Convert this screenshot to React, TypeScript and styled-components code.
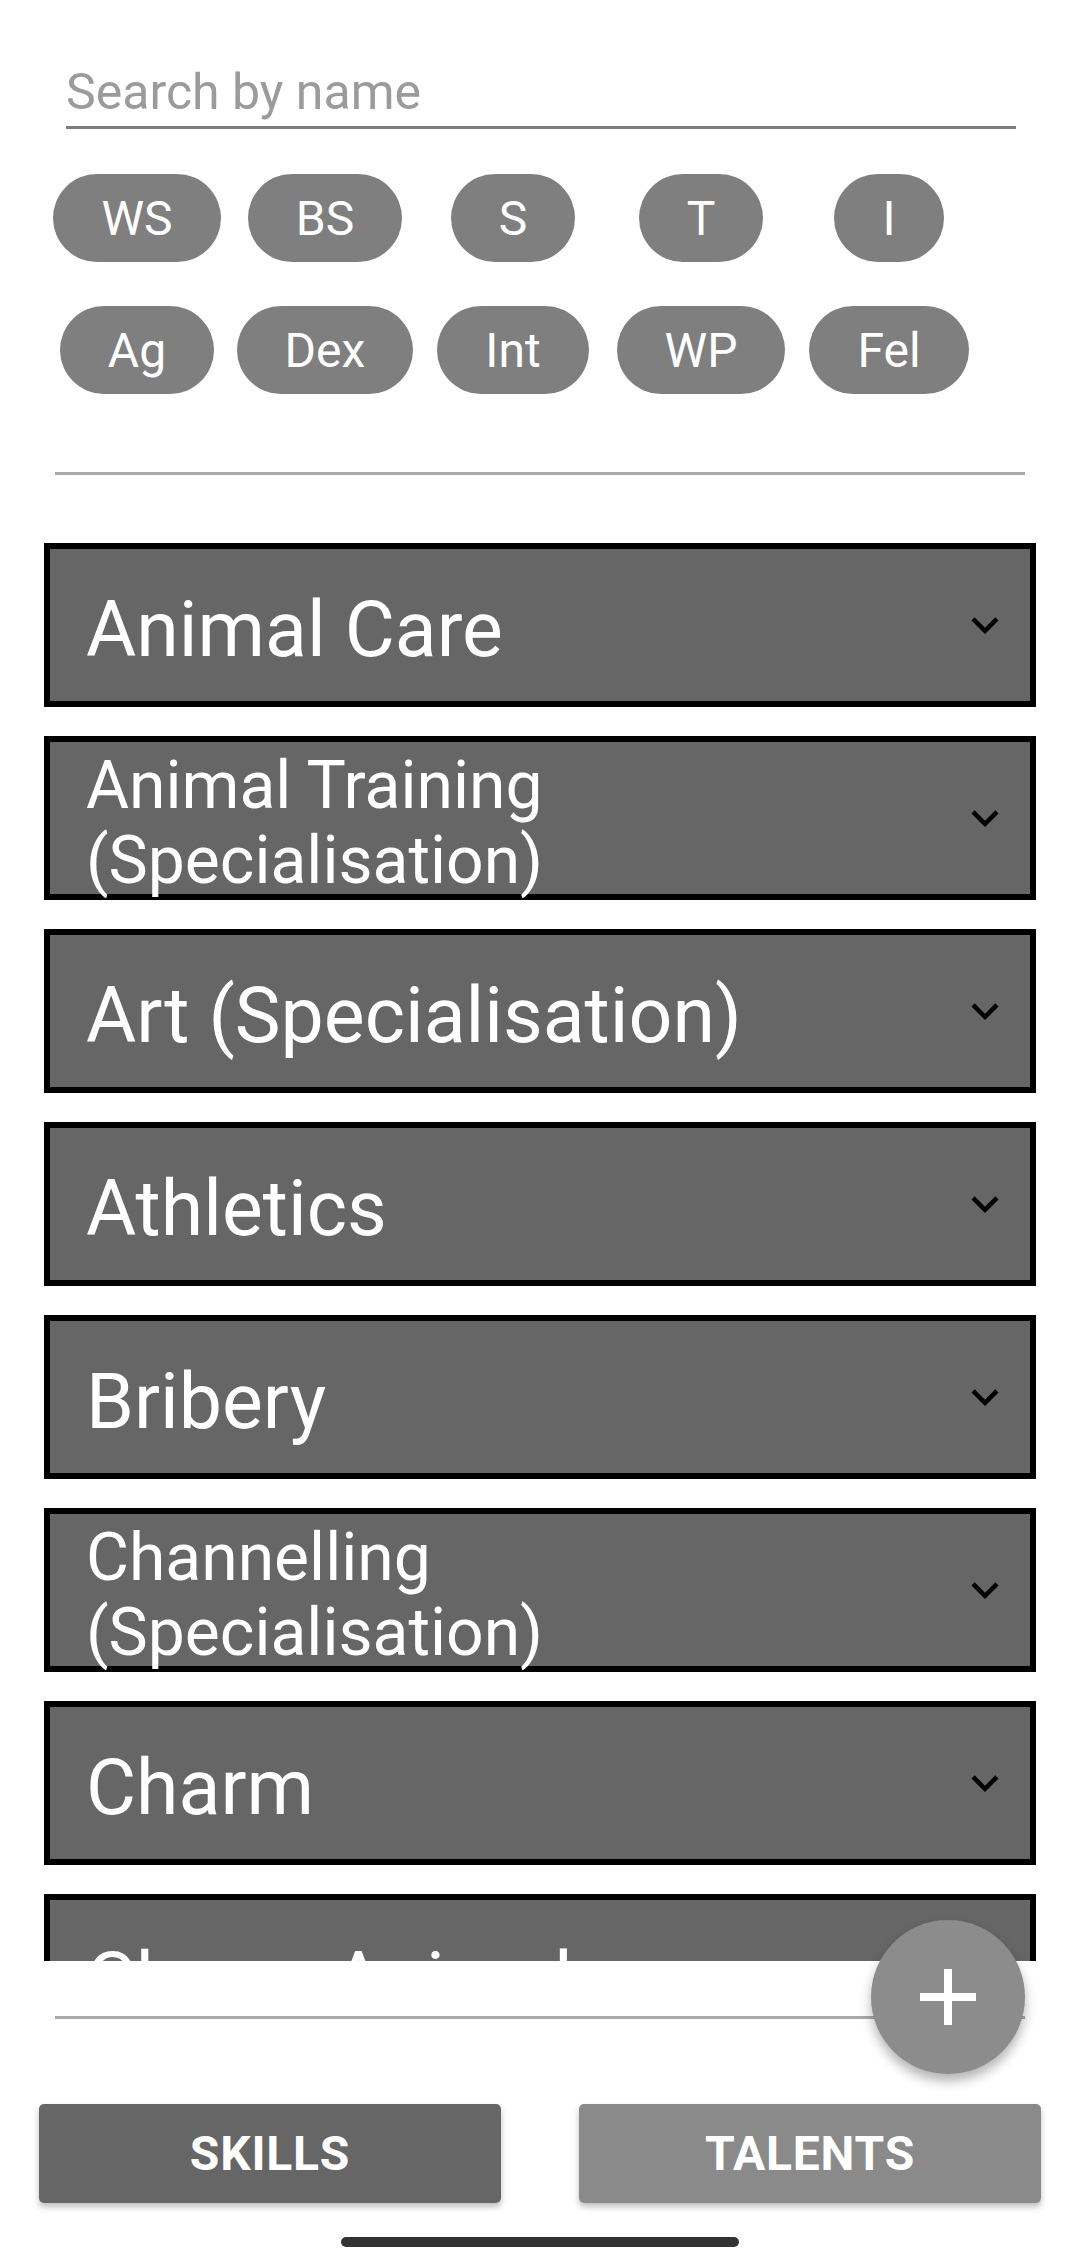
import React from "react";
import styled, { createGlobalStyle } from "styled-components";

const GlobalStyle = createGlobalStyle`
  body {
    margin: 0;
    background: #ffffff;
    font-family: Roboto, "Noto Sans", Arial, sans-serif;
  }
`;

const Page = styled.div`
  position: relative;
  width: 1080px;
  height: 2264px;
  overflow: hidden;
  display: flex;
  flex-direction: column;
  background: #ffffff;
`;

const SearchField = styled.div`
  margin: 64px 64px 0 66px;
  padding-bottom: 6px;
  border-bottom: 3px solid #7c7c7c;
`;

const SearchInput = styled.input`
  display: block;
  width: 100%;
  height: 56px;
  padding: 0;
  border: none;
  outline: none;
  background: transparent;
  font-family: Roboto, "Noto Sans", sans-serif;
  font-size: 50px;
  line-height: 56px;
  color: #333;
  &::placeholder {
    color: #9b9b9b;
  }
`;

const ChipGrid = styled.div`
  display: grid;
  grid-template-columns: repeat(5, 188px);
  row-gap: 44px;
  justify-items: center;
  margin: 45px 0 0 43px;
`;

const Chip = styled.button`
  height: 88px;
  padding: 0 48px;
  border: none;
  border-radius: 44px;
  background: #7f7f7f;
  color: #ffffff;
  font-family: Roboto, "Noto Sans", sans-serif;
  font-size: 48px;
  display: inline-flex;
  align-items: center;
  justify-content: center;
`;

const Divider = styled.div<{ $top: number }>`
  height: 3px;
  margin: ${(p) => p.$top}px 55px 0 55px;
  background: #aaaaaa;
`;

const SkillList = styled.div`
  height: 1486px;
  padding-top: 68px;
  box-sizing: border-box;
  overflow: hidden;
  display: flex;
  flex-direction: column;
  gap: 29px;
`;

const SkillRow = styled.div`
  flex: none;
  height: 164px;
  margin: 0 44px;
  box-sizing: border-box;
  border: 6px solid #000000;
  background: #666666;
  display: flex;
  align-items: center;
  padding: 0 18px 0 36px;
`;

const SkillTitle = styled.div<{ $compact?: boolean }>`
  flex: 1;
  padding-top: 10px;
  color: #ffffff;
  font-family: Roboto, "Noto Sans", sans-serif;
  font-size: ${(p) => (p.$compact ? 66 : 77)}px;
  line-height: ${(p) => (p.$compact ? 75 : 84)}px;
  white-space: pre-line;
`;

const Chevron = styled.svg`
  flex: none;
  width: 54px;
  height: 54px;
`;

const TabBar = styled.div`
  display: flex;
  justify-content: space-between;
  margin: 85px 39px 0 39px;
`;

const TabButton = styled.button<{ $active?: boolean }>`
  width: 462px;
  height: 99px;
  border: none;
  border-radius: 5px;
  background: ${(p) => (p.$active ? "#666666" : "#8a8a8a")};
  box-shadow: 0 4px 6px rgba(0, 0, 0, 0.25);
  color: #ffffff;
  font-family: Roboto, "Noto Sans", sans-serif;
  font-size: 48px;
  font-weight: 700;
  letter-spacing: 0.8px;
`;

const HomeIndicator = styled.div`
  width: 398px;
  height: 10px;
  margin: 34px auto 0 auto;
  border-radius: 5px;
  background: #333333;
`;

const Fab = styled.button`
  position: absolute;
  left: 871px;
  top: 1920px;
  width: 154px;
  height: 154px;
  border: none;
  border-radius: 50%;
  background: #8c8c8c;
  box-shadow: 0 7px 12px rgba(0, 0, 0, 0.3);
  display: flex;
  align-items: center;
  justify-content: center;
  padding: 0;
`;

const stats = [
  ["WS", "BS", "S", "T", "I"],
  ["Ag", "Dex", "Int", "WP", "Fel"],
];

const skills = [
  { name: "Animal Care" },
  { name: "Animal Training\n(Specialisation)", compact: true },
  { name: "Art (Specialisation)" },
  { name: "Athletics" },
  { name: "Bribery" },
  { name: "Channelling\n(Specialisation)", compact: true },
  { name: "Charm" },
  { name: "Charm Animal" },
];

const ExpandIcon = () => (
  <Chevron viewBox="0 0 24 24">
    <path
      d="M16.59 8.59L12 13.17 7.41 8.59 6 10l6 6 6-6z"
      fill="#000000"
    />
  </Chevron>
);

export default function App() {
  return (
    <Page>
      <GlobalStyle />
      <SearchField>
        <SearchInput placeholder="Search by name" />
      </SearchField>
      <ChipGrid>
        {stats.flat().map((s) => (
          <Chip key={s}>{s}</Chip>
        ))}
      </ChipGrid>
      <Divider $top={78} />
      <SkillList>
        {skills.map((skill) => (
          <SkillRow key={skill.name}>
            <SkillTitle $compact={skill.compact}>{skill.name}</SkillTitle>
            <ExpandIcon />
          </SkillRow>
        ))}
      </SkillList>
      <Divider $top={55} />
      <TabBar>
        <TabButton $active>SKILLS</TabButton>
        <TabButton>TALENTS</TabButton>
      </TabBar>
      <HomeIndicator />
      <Fab>
        <svg width="56" height="56" viewBox="5 5 14 14">
          <path d="M19 13h-6v6h-2v-6H5v-2h6V5h2v6h6v2z" fill="#ffffff" />
        </svg>
      </Fab>
    </Page>
  );
}
